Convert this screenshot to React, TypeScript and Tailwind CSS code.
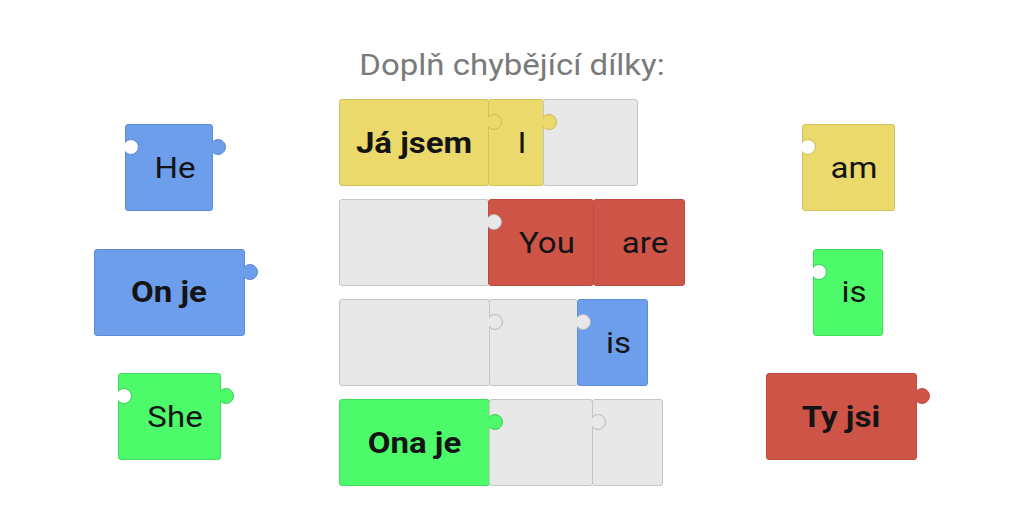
import React from "react";

type Tone = "yellow" | "blue" | "red" | "green" | "gray";

const TONES: Record<Tone, { box: string; fill: string; stroke: string }> = {
  yellow: { box: "bg-[#ebd96b] border-[#d3c15a]", fill: "#ebd96b", stroke: "#cbb955" },
  blue: { box: "bg-[#6d9eeb] border-[#5d8bd6]", fill: "#6d9eeb", stroke: "#5a86cf" },
  red: { box: "bg-[#cf5448] border-[#bd4b40]", fill: "#cf5448", stroke: "#c04c41" },
  green: { box: "bg-[#4cfa6a] border-[#3fdc5b]", fill: "#4cfa6a", stroke: "#38cf53" },
  gray: { box: "bg-[#e8e8e8] border-[#c4c4c4]", fill: "#e8e8e8", stroke: "#b8b8b8" },
};

// Knob sticking out of the right edge of a piece
function Tab({ tone }: { tone: Tone }) {
  const t = TONES[tone];
  return (
    <svg
      className="absolute z-10 top-[13px] right-[-16px] pointer-events-none"
      width="20"
      height="18"
      viewBox="0 0 20 18"
    >
      <path d="M4 4.5 A7.5 7.5 0 1 1 4 13.5" fill={t.fill} stroke={t.stroke} strokeWidth="1" />
    </svg>
  );
}

// Empty socket cut into the left edge of a loose piece
function Notch({ tone }: { tone: Tone }) {
  const t = TONES[tone];
  return (
    <svg
      className="absolute top-[13px] left-[-1px] pointer-events-none"
      width="16"
      height="18"
      viewBox="0 0 16 18"
    >
      <path d="M0 4.5 A7.5 7.5 0 1 1 0 13.5" fill="#ffffff" stroke={t.stroke} strokeWidth="1" />
    </svg>
  );
}

type PieceProps = {
  tone: Tone;
  w: string;
  h?: string;
  label?: string;
  bold?: boolean;
  tab?: boolean;
  notch?: boolean;
  extra?: string;
};

function Piece({ tone, w, h = "h-[87px]", label, bold, tab, notch, extra = "" }: PieceProps) {
  return (
    <div
      className={`relative flex items-center justify-center border rounded-[3px] ${TONES[tone].box} ${w} ${h} ${
        bold ? "" : "pl-3"
      } ${extra}`}
    >
      {notch && <Notch tone={tone} />}
      {label && (
        <span
          className={`inline-block scale-y-[0.87] text-[33px] leading-[36px] text-[#141414] whitespace-nowrap ${
            bold ? "font-bold" : "font-normal"
          }`}
        >
          {label}
        </span>
      )}
      {tab && <Tab tone={tone} />}
    </div>
  );
}

export default function App() {
  return (
    <div className="w-[1024px] h-[512px] bg-white overflow-hidden font-[Roboto,sans-serif] pt-[47px]">
      <h1 className="h-[36px] flex justify-center text-[33px] leading-[36px] text-[#7a7a7a] font-normal">
        <span className="inline-block scale-y-[0.87]">Doplň chybějící dílky:</span>
      </h1>

      <div className="mt-[16px] flex items-start">
        {/* loose pieces, left */}
        <div className="w-[339px] pl-[13px] pt-[25px] flex flex-col items-center gap-[37.5px]">
          <Piece tone="blue" w="w-[88px]" label="He" notch tab extra="mr-[14px]" />
          <Piece tone="blue" w="w-[151px]" label="On je" bold tab extra="mr-[14px]" />
          <Piece tone="green" w="w-[103px]" label="She" notch tab extra="mr-[14px]" />
        </div>

        {/* sentence rows */}
        <div className="w-[346px] flex flex-col gap-[13px]">
          <div className="flex">
            <Piece tone="yellow" w="w-[150px]" label="Já jsem" bold tab />
            <Piece tone="yellow" w="w-[56px]" label="I" tab extra="-ml-px" />
            <Piece tone="gray" w="w-[95px]" extra="-ml-px" />
          </div>
          <div className="flex">
            <Piece tone="gray" w="w-[150px]" tab />
            <Piece tone="red" w="w-[106px]" label="You" extra="-ml-px" />
            <Piece tone="red" w="w-[92px]" label="are" extra="-ml-px" />
          </div>
          <div className="flex">
            <Piece tone="gray" w="w-[151px]" tab />
            <Piece tone="gray" w="w-[89px]" tab extra="-ml-px" />
            <Piece tone="blue" w="w-[71px]" label="is" extra="-ml-px" />
          </div>
          <div className="flex">
            <Piece tone="green" w="w-[151px]" label="Ona je" bold tab />
            <Piece tone="gray" w="w-[104px]" tab extra="-ml-px" />
            <Piece tone="gray" w="w-[71px]" extra="-ml-px" />
          </div>
        </div>

        {/* loose pieces, right */}
        <div className="w-[326px] pt-[25px] flex flex-col items-center gap-[37.5px]">
          <Piece tone="yellow" w="w-[93px]" label="am" notch />
          <Piece tone="green" w="w-[70px]" label="is" notch />
          <Piece tone="red" w="w-[151px]" label="Ty jsi" bold tab extra="mr-[14px]" />
        </div>
      </div>
    </div>
  );
}
